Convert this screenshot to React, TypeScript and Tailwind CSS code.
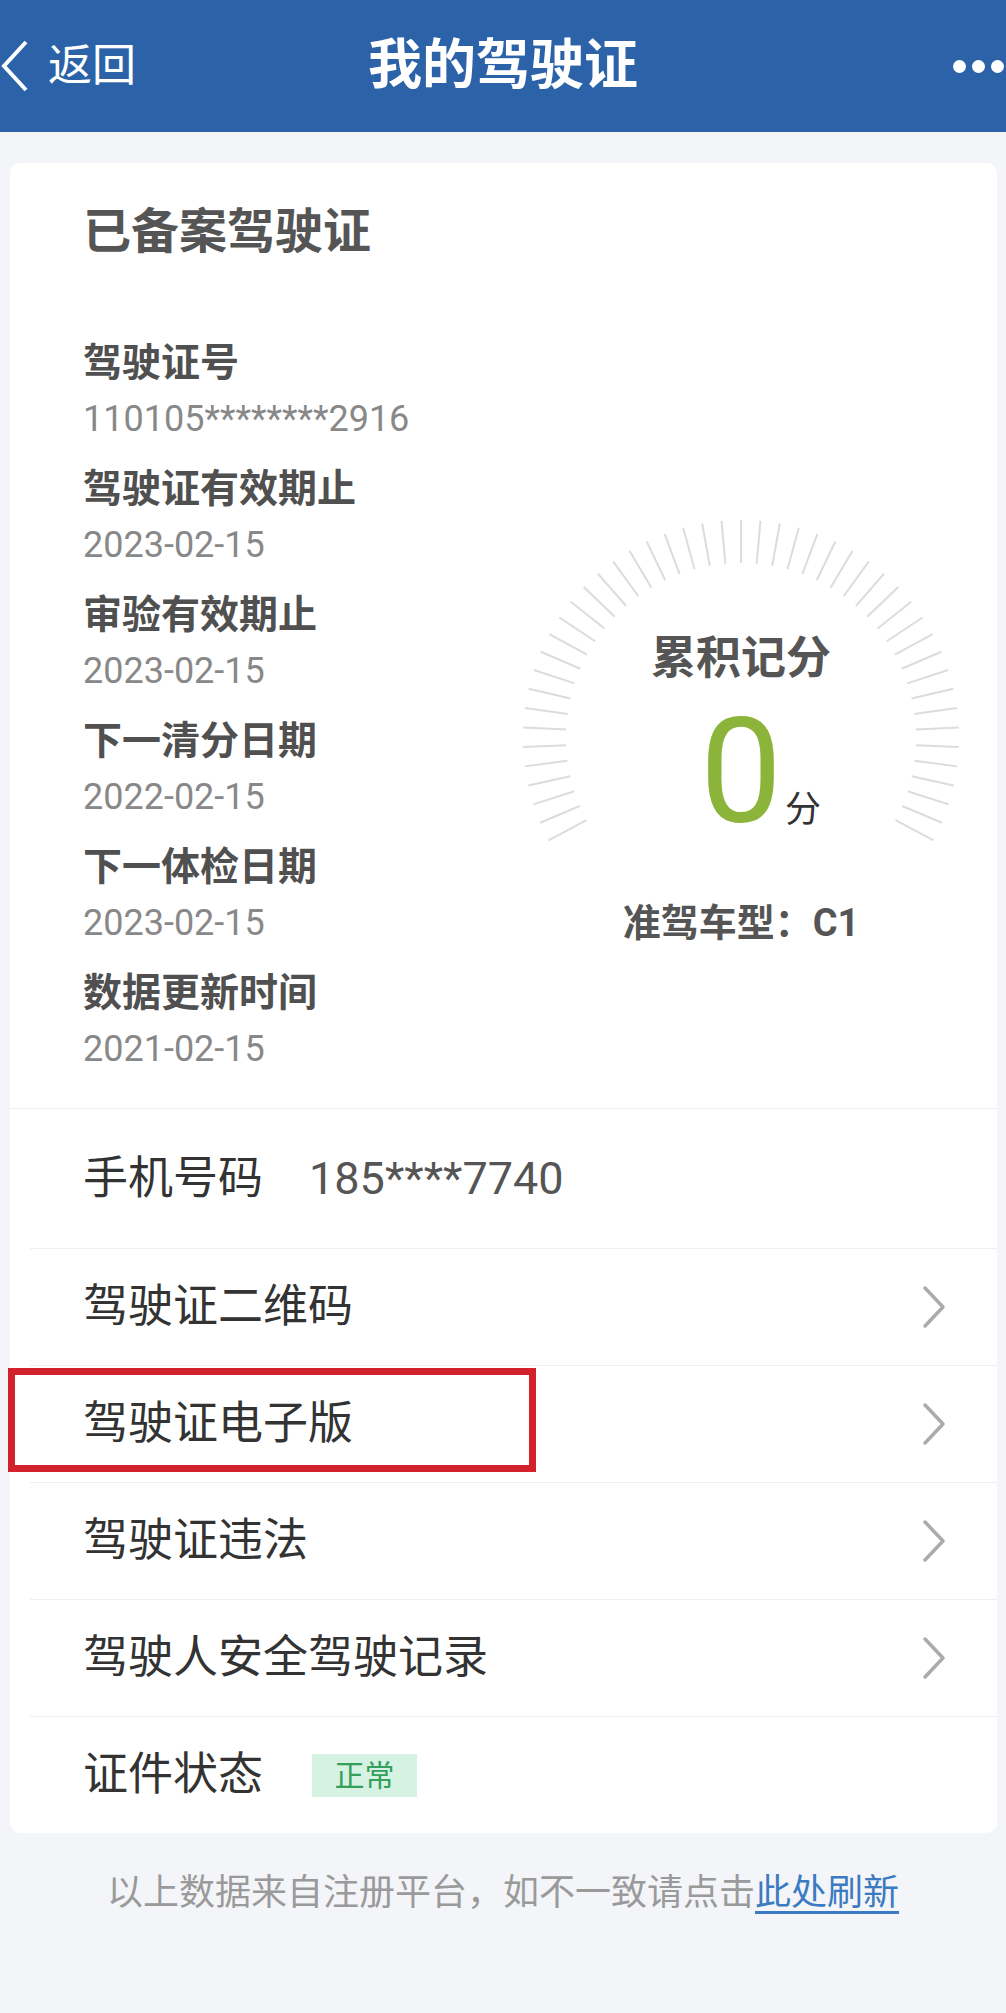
import React from "react";

const F = "font-['Roboto','Noto_Sans_CJK_SC',sans-serif]";

function Chevron() {
  return (
    <svg width="26" height="44" viewBox="0 0 26 44" className="shrink-0">
      <polyline points="4,3 22,22 4,41" fill="none" stroke="#ababab" strokeWidth="3.5" strokeLinecap="round" strokeLinejoin="round" />
    </svg>
  );
}

function Gauge() {
  const ticks = [];
  const n = 47;
  const span = 236;
  for (let i = 0; i < n; i++) {
    const a = ((-span / 2 + (span / (n - 1)) * i) * Math.PI) / 180;
    const ro = 218;
    const ri = 175;
    const sx = Math.sin(a);
    const cy = -Math.cos(a);
    ticks.push(
      <line
        key={i}
        x1={220 + ri * sx}
        y1={220 + ri * cy}
        x2={220 + ro * sx}
        y2={220 + ro * cy}
        stroke="#dcdcdc"
        strokeWidth="2"
      />
    );
  }
  return (
    <div className="relative w-[440px] h-[440px] shrink-0 mr-[36px] mt-[183px]">
      <svg width="440" height="440" viewBox="0 0 440 440" className="absolute inset-0">
        {ticks}
      </svg>
      <div className="relative flex flex-col items-center pt-[116px]">
        <div className="text-[45px] leading-[50px] font-bold text-[#555555]">累积记分</div>
        <div className="mt-[16px] flex items-baseline justify-center">
          <span className="invisible text-[36px] mr-[3px]">分</span>
          <span className="text-[146px] leading-[145px] text-[#8cb43a]">0</span>
          <span className="text-[36px] leading-[40px] text-[#333333] ml-[3px]">分</span>
        </div>
        <div className="mt-[56px] text-[38px] leading-[44px] font-bold text-[#555555]">准驾车型：C1</div>
      </div>
    </div>
  );
}

const info = [
  ["驾驶证号", "110105********2916"],
  ["驾驶证有效期止", "2023-02-15"],
  ["审验有效期止", "2023-02-15"],
  ["下一清分日期", "2022-02-15"],
  ["下一体检日期", "2023-02-15"],
  ["数据更新时间", "2021-02-15"],
];

const links = ["驾驶证二维码", "驾驶证电子版", "驾驶证违法", "驾驶人安全驾驶记录"];

export default function App() {
  return (
    <div className={`${F} min-h-[2013px] w-full bg-[#f4f5f9]`}>
      {/* header */}
      <div className="h-[132px] bg-[#2c63a8] flex items-center text-white">
        <div className="w-[170px] flex items-center">
          <svg width="30" height="54" viewBox="0 0 30 54" className="shrink-0">
            <polyline points="26,3 4,27 26,51" fill="none" stroke="#ffffff" strokeWidth="4" strokeLinejoin="miter" />
          </svg>
          <span className="ml-[18px] text-[44px] leading-[54px]">返回</span>
        </div>
        <div className="flex-1 text-center text-[54px] leading-[64px] font-bold">我的驾驶证</div>
        <div className="w-[170px] flex items-center justify-end gap-[6px] pr-[2px]">
          <span className="w-[13px] h-[13px] rounded-full bg-white" />
          <span className="w-[13px] h-[13px] rounded-full bg-white" />
          <span className="w-[13px] h-[13px] rounded-full bg-white" />
        </div>
      </div>

      {/* card */}
      <div className="mt-[31px] ml-[10px] mr-[9px] bg-white rounded-[10px]">
        <div className="pt-[39px] pl-[73px] text-[48px] leading-[60px] font-bold text-[#555555]">已备案驾驶证</div>

        <div className="mt-[73px] pl-[73px] pb-[30px] flex items-start justify-between">
          <div className="flex flex-col gap-[13px]">
            {info.map(([k, v]) => (
              <div key={k}>
                <div className="text-[39px] leading-[56px] font-bold text-[#505050]">{k}</div>
                <div className="text-[36px] leading-[57px] text-[#888888]">{v}</div>
              </div>
            ))}
          </div>
          <Gauge />
        </div>

        <div className="h-px bg-[#efefef]" />
        <div className="h-[139px] pl-[73px] flex items-center text-[45px] text-[#333333]">
          <span>手机号码</span>
          <span className="ml-[46px] text-[#555555]">185****7740</span>
        </div>

        {links.map((t) => (
          <div key={t}>
            <div className="h-px bg-[#efefef] ml-[20px]" />
            <div className="relative h-[116px] pl-[73px] pr-[50px] flex items-center justify-between text-[45px] text-[#333333]">
              <span>{t}</span>
              <Chevron />
              {t === "驾驶证电子版" && (
                <div className="absolute left-[-2px] top-[2px] w-[528px] h-[104px] border-[7px] border-[#d3222c]" />
              )}
            </div>
          </div>
        ))}

        <div className="h-px bg-[#efefef] ml-[20px]" />
        <div className="h-[116px] pl-[73px] flex items-center text-[45px] text-[#333333]">
          <span>证件状态</span>
          <span className="ml-[49px] w-[105px] h-[43px] bg-[#d5f2e3] text-[#34a05c] text-[30px] leading-[43px] text-center">正常</span>
        </div>
      </div>

      <div className="mt-[35px] text-center text-[36px] leading-[50px] text-[#9a9a9a]">
        以上数据来自注册平台，如不一致请点击<span className="text-[#3a7bc2] underline underline-offset-[6px]">此处刷新</span>
      </div>
    </div>
  );
}
